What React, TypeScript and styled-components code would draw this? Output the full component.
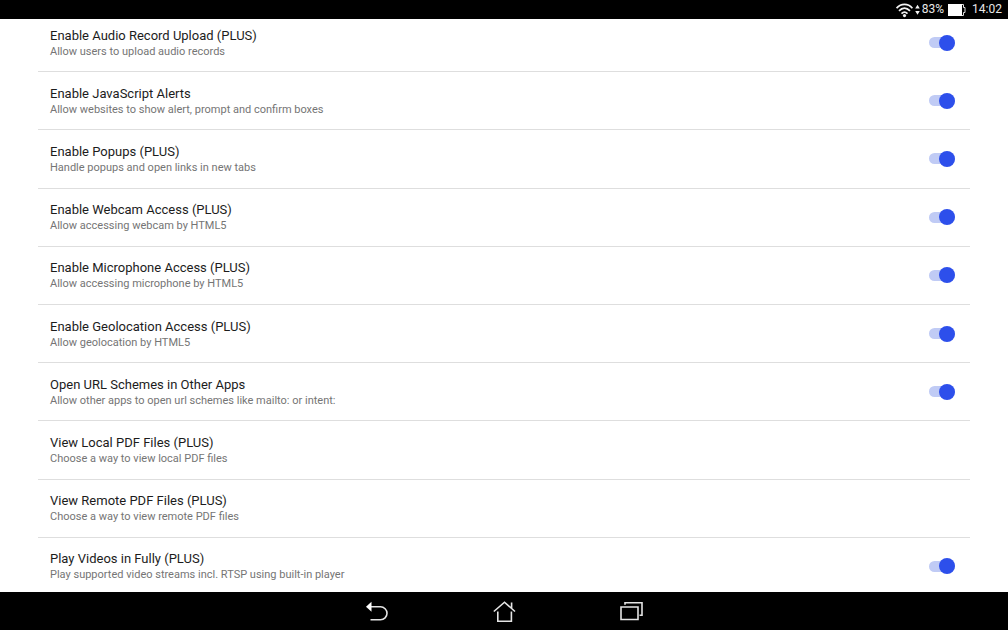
import React, { useState } from "react";
import styled, { createGlobalStyle } from "styled-components";

const GlobalStyle = createGlobalStyle`
  *, *::before, *::after { box-sizing: border-box; }
  body {
    margin: 0;
    background: #fff;
    font-family: Roboto, "Noto Sans", sans-serif;
  }
`;

const Screen = styled.div`
  display: flex;
  flex-direction: column;
  height: 100vh;
  overflow: hidden;
`;

const StatusBar = styled.header`
  display: flex;
  flex: none;
  align-items: center;
  justify-content: flex-end;
  height: 19px;
  padding-right: 6px;
  background: #000;
  color: #e8e8e8;
  font-size: 12px;
  line-height: 19px;
`;

const Battery = styled.span`
  margin-right: 4px;
`;

const Clock = styled.time`
  margin-left: 6px;
`;

const Content = styled.main`
  display: flex;
  flex: 1;
  flex-direction: column;
  min-height: 0;
  padding: 0 38px;
  overflow: hidden;
`;

const SettingsList = styled.ul`
  display: grid;
  flex: 1;
  grid-auto-rows: 1fr;
  margin: -5px 0 -4px;
  padding: 0;
  list-style: none;
`;

const SettingItem = styled.li`
  display: flex;
  align-items: center;
  justify-content: space-between;
  min-height: 58px;
  padding: 0 15px 0 12px;
  border-bottom: 1px solid #dedede;
`;

const Label = styled.label`
  display: flex;
  flex: 1;
  flex-direction: column;
`;

const ChoiceButton = styled.button`
  display: flex;
  flex: 1;
  flex-direction: column;
  padding: 0;
  border: 0;
  background: none;
  font-family: inherit;
  text-align: left;
`;

const Title = styled.span`
  color: #1c1c1c;
  font-size: 13px;
  line-height: 17px;
`;

const Summary = styled.span`
  color: #757575;
  font-size: 11px;
  line-height: 15px;
`;

const Toggle = styled.input`
  display: grid;
  flex: none;
  align-items: center;
  width: 26px;
  height: 16px;
  margin: 0;
  appearance: none;

  &::before,
  &::after {
    content: "";
    grid-area: 1 / 1;
  }

  &::before {
    height: 11px;
    border-radius: 6px;
    background: #d0d0d0;
  }

  &::after {
    width: 16px;
    height: 16px;
    border-radius: 50%;
    background: #f1f1f1;
  }

  &:checked::before {
    background: #c0cbf5;
  }

  &:checked::after {
    justify-self: end;
    background: #2d4feb;
  }
`;

const NavBar = styled.nav`
  display: flex;
  flex: none;
  align-items: center;
  justify-content: center;
  gap: 87px;
  height: 38px;
  background: #000;
`;

const NavButton = styled.button`
  display: flex;
  align-items: center;
  justify-content: center;
  width: 40px;
  height: 38px;
  padding: 0;
  border: 0;
  background: none;
  color: #e4e4e4;
`;

type Setting = { id: string; title: string; summary: string; toggle: boolean };

const settings: Setting[] = [
  { id: "audio", title: "Enable Audio Record Upload (PLUS)", summary: "Allow users to upload audio records", toggle: true },
  { id: "alerts", title: "Enable JavaScript Alerts", summary: "Allow websites to show alert, prompt and confirm boxes", toggle: true },
  { id: "popups", title: "Enable Popups (PLUS)", summary: "Handle popups and open links in new tabs", toggle: true },
  { id: "webcam", title: "Enable Webcam Access (PLUS)", summary: "Allow accessing webcam by HTML5", toggle: true },
  { id: "microphone", title: "Enable Microphone Access (PLUS)", summary: "Allow accessing microphone by HTML5", toggle: true },
  { id: "geolocation", title: "Enable Geolocation Access (PLUS)", summary: "Allow geolocation by HTML5", toggle: true },
  { id: "schemes", title: "Open URL Schemes in Other Apps", summary: "Allow other apps to open url schemes like mailto: or intent:", toggle: true },
  { id: "local-pdf", title: "View Local PDF Files (PLUS)", summary: "Choose a way to view local PDF files", toggle: false },
  { id: "remote-pdf", title: "View Remote PDF Files (PLUS)", summary: "Choose a way to view remote PDF files", toggle: false },
  { id: "videos", title: "Play Videos in Fully (PLUS)", summary: "Play supported video streams incl. RTSP using built-in player", toggle: true },
];

function SettingRow({ setting }: { setting: Setting }) {
  const [checked, setChecked] = useState(true);
  const text = (
    <>
      <Title>{setting.title}</Title>
      <Summary>{setting.summary}</Summary>
    </>
  );
  return (
    <SettingItem>
      {setting.toggle ? (
        <>
          <Label htmlFor={setting.id}>{text}</Label>
          <Toggle
            id={setting.id}
            type="checkbox"
            checked={checked}
            onChange={(event) => setChecked(event.target.checked)}
          />
        </>
      ) : (
        <ChoiceButton type="button">{text}</ChoiceButton>
      )}
    </SettingItem>
  );
}

const WifiIcon = () => (
  <svg width="26" height="16" viewBox="0 0 26 16" fill="none" aria-hidden="true">
    <g stroke="#f2f2f2" strokeWidth="1.7">
      <path d="M0.6 6.2C5 1.2 12 1.2 16.4 6.2" />
      <path d="M3 8.9C6.5 5.2 10.5 5.2 14 8.9" />
      <path d="M5.5 11.6C7.5 9.5 9.5 9.5 11.5 11.6" />
    </g>
    <circle cx="8.5" cy="13.6" r="1.6" fill="#f2f2f2" />
    <path d="M21.5 2.8l2.3 3.8h-4.6zM21.5 12.8l2.3-3.8h-4.6z" fill="#f2f2f2" />
  </svg>
);

const BatteryIcon = () => (
  <svg width="18" height="14" viewBox="0 0 18 14" aria-hidden="true">
    <path d="M0 1h14v12H0z" fill="#fff" />
    <path d="M14 1.5h1.5v3H17v5h-1.5v3H14" fill="none" stroke="#ddd" strokeWidth="1" />
  </svg>
);

const BackIcon = () => (
  <svg width="24" height="24" viewBox="0 0 24 24" fill="none" aria-hidden="true">
    <path d="M5 7.8h10.5a6.5 6.5 0 0 1 0 13H5.5" stroke="currentColor" strokeWidth="1.6" />
    <path d="M1 7.8l5.5-5v10z" fill="#fff" />
  </svg>
);

const HomeIcon = () => (
  <svg width="24" height="24" viewBox="0 0 24 24" fill="none" stroke="currentColor" strokeWidth="1.6" aria-hidden="true">
    <path d="M1.8 12.5L12.5 3.2 23 12.5M19.6 9.3V3.5M5.8 12.5v9.8h13.6v-9.8" />
  </svg>
);

const RecentsIcon = () => (
  <svg width="24" height="24" viewBox="0 0 24 24" fill="none" stroke="currentColor" strokeWidth="1.6" aria-hidden="true">
    <path d="M2 8h17v12.5h-17z" />
    <path d="M6 5.8V3.7h17v12.5h-2.5" />
  </svg>
);

export default function App() {
  return (
    <Screen>
      <GlobalStyle />
      <StatusBar>
        <WifiIcon />
        <Battery>83%</Battery>
        <BatteryIcon />
        <Clock dateTime="14:02">14:02</Clock>
      </StatusBar>
      <Content>
        <SettingsList>
          {settings.map((setting) => (
            <SettingRow key={setting.id} setting={setting} />
          ))}
        </SettingsList>
      </Content>
      <NavBar>
        <NavButton type="button" aria-label="Back"><BackIcon /></NavButton>
        <NavButton type="button" aria-label="Home"><HomeIcon /></NavButton>
        <NavButton type="button" aria-label="Recent apps"><RecentsIcon /></NavButton>
      </NavBar>
    </Screen>
  );
}
